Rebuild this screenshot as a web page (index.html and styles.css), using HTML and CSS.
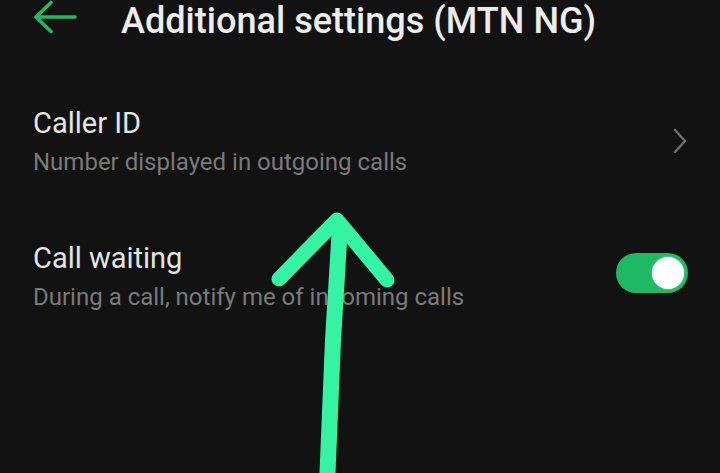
FILE: index.html
```html
<!DOCTYPE html>
<html lang="en">
<head>
<meta charset="utf-8">
<title>Additional settings (MTN NG)</title>
<link rel="stylesheet" href="styles.css">
</head>
<body>
<div class="screen">
  <header class="appbar">
    <svg class="back" width="44" height="34" viewBox="0 0 44 34" aria-hidden="true">
      <path d="M3 17 H42 M3 17 L18 2.5 M3 17 L18 31.5" fill="none" stroke="#22b965" stroke-width="3.6" stroke-linecap="round" stroke-linejoin="round"/>
    </svg>
    <h1 class="title">Additional settings (MTN NG)</h1>
  </header>
  <ul class="list">
    <li class="item">
      <div class="text">
        <div class="item-title">Caller ID</div>
        <div class="item-summary">Number displayed in outgoing calls</div>
      </div>
      <svg class="chevron" width="16" height="26" viewBox="0 0 16 26" aria-hidden="true">
        <path d="M3 2 L13 13 L3 24" fill="none" stroke="#6e6e6e" stroke-width="2.4" stroke-linecap="round" stroke-linejoin="round"/>
      </svg>
    </li>
    <li class="item">
      <div class="text">
        <div class="item-title">Call waiting</div>
        <div class="item-summary">During a call, notify me of incoming calls</div>
      </div>
      <div class="switch"><span class="knob"></span></div>
    </li>
  </ul>
  <svg class="annotation" width="720" height="473" viewBox="0 0 720 473" aria-hidden="true">
    <g fill="none" stroke="#34f3a2" stroke-linecap="round" stroke-linejoin="round">
      <path d="M279 279 L337 220 L387 280" stroke-width="15"/>
      <path d="M340 226 L333 340 L327 485" stroke-width="16"/>
    </g>
  </svg>
</div>
</body>
</html>
```

FILE: styles.css
```css
* { box-sizing: border-box; }
html, body {
  margin: 0;
  padding: 0;
  background: #121212;
}
body {
  font-family: Roboto, "Liberation Sans", sans-serif;
  color: #e4e4e4;
  overflow: hidden;
}
.screen {
  position: relative;
  width: 720px;
  height: 473px;
  overflow: hidden;
  background: #121212;
}
.appbar {
  display: flex;
  align-items: flex-start;
  height: 42px;
  padding-left: 33px;
}
.back {
  flex: none;
}
.title {
  margin: 0 0 0 44px;
  font-size: 36.1px;
  font-weight: 500;
  line-height: 42.4px;
  color: #ececec;
  white-space: nowrap;
}
.list {
  list-style: none;
  margin: 30.6px 0 0;
  padding: 0;
}
.item {
  display: flex;
  align-items: center;
  justify-content: space-between;
  padding: 32px 32px 31px 33px;
}
.item-title {
  font-size: 29px;
  line-height: 36px;
  color: #e4e4e4;
}
.item-summary {
  margin-top: 6px;
  font-size: 24px;
  line-height: 30px;
  color: #7a7a7a;
}
.chevron {
  flex: none;
}
.switch {
  flex: none;
  display: flex;
  align-items: center;
  justify-content: flex-end;
  width: 72px;
  height: 40px;
  margin-top: -5px;
  padding: 0 4px;
  border-radius: 20px;
  background: #1fb864;
}
.knob {
  width: 32px;
  height: 32px;
  border-radius: 50%;
  background: #ffffff;
  box-shadow: 0 0 2px rgba(255,255,255,0.6);
}
.annotation {
  position: absolute;
  left: 0;
  top: 0;
  pointer-events: none;
}
```
